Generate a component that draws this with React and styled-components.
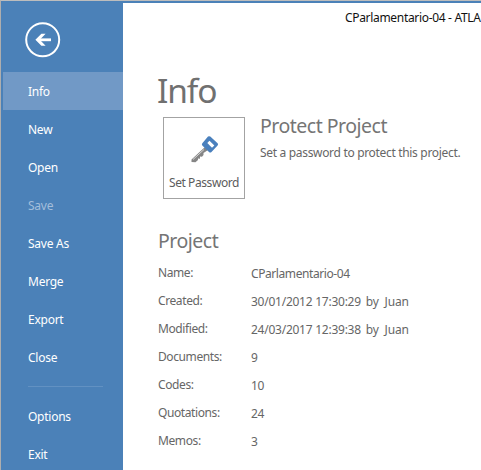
import React from "react";
import styled, { createGlobalStyle } from "styled-components";

const Global = createGlobalStyle`
  * { box-sizing: border-box; }
  body { margin: 0; overflow: hidden; background: #fff; }
`;

const Window = styled.div`
  width: 481px;
  height: 470px;
  display: grid;
  grid-template-columns: 122px 1fr;
  overflow: hidden;
  border-top: 1px solid #bdbdbd;
  border-left: 1px solid #aeaeae;
  background: #fff;
  font-family: "Noto Sans", "Open Sans", sans-serif;
  font-size: 12px;
  line-height: 16px;
  white-space: nowrap;
  color: #666;
`;

const Sidebar = styled.nav`
  background: #4b81b8;
  color: #fff;
  padding: 21px 0 0 2px;
`;

const BackButton = styled.button`
  display: block;
  width: 36px;
  height: 36px;
  margin: 0 0 14px 22px;
  padding: 0;
  border: 0;
  background: none;
`;

const MenuItem = styled.div`
  height: 38px;
  padding: 2px 0 0 25px;
  display: flex;
  align-items: center;
  background: ${(p) => (p.$active ? "#7199c6" : "transparent")};
  color: ${(p) => (p.$disabled ? "#a3bedb" : "#fff")};
  letter-spacing: -0.25px;
`;

const Divider = styled.hr`
  width: 75px;
  height: 1px;
  margin: 10px 0 10px 25px;
  border: 0;
  background: #6291c2;
`;

const Main = styled.main`
  border-top: 2px solid #4b81b8;
  padding-left: 35px;
`;

const WindowTitle = styled.div`
  height: 30px;
  padding: 7px 0 0 187px;
  color: #111;
  letter-spacing: ${(p) => p.$track}px;
`;

const PageTitle = styled.h1`
  margin: 33px 0 0 -1px;
  height: 51px;
  font-size: 33.5px;
  line-height: 48px;
  font-weight: 400;
  color: #707070;
  letter-spacing: ${(p) => p.$track}px;
`;

const Protect = styled.section`
  display: flex;
  height: 82px;
  padding-left: 5px;
`;

const ProtectText = styled.div`
  margin-top: -3px;
`;

const PasswordButton = styled.button`
  width: 82px;
  height: 82px;
  margin: 0 15px 0 0;
  padding: 17px 0 0;
  display: flex;
  flex-direction: column;
  align-items: center;
  border: 1px solid #a3a3a3;
  background: #fff;
  color: #5c5c5c;
  font: inherit;
  letter-spacing: ${(p) => p.$track}px;

  svg { margin: 0 0 10px 2px; flex: none; }
`;

const Heading = styled.h2`
  margin: 0;
  font-size: 19.5px;
  line-height: 24px;
  font-weight: 400;
  color: #757575;
  letter-spacing: ${(p) => p.$track}px;
`;

const Description = styled.p`
  margin: 7px 0 0;
  letter-spacing: ${(p) => p.$track}px;
`;

const Details = styled.section`
  padding-top: 30px;
`;

const Rows = styled.dl`
  margin: 6px 0 0;
`;

const Row = styled.div`
  height: 28px;
  display: grid;
  grid-template-columns: 93px 1fr;
  align-items: center;
`;

const Label = styled.dt`
  letter-spacing: ${(p) => p.$track}px;
`;

const Value = styled.dd`
  margin: 0;
  padding-top: 2px;
  display: flex;
  letter-spacing: ${(p) => p.$track}px;
`;

const Author = styled.span`
  margin-left: 5px;
  letter-spacing: -0.2px;
  word-spacing: 3px;
`;

const menu = [
  { text: "Info", active: true },
  { text: "New" },
  { text: "Open" },
  { text: "Save", disabled: true },
  { text: "Save As" },
  { text: "Merge" },
  { text: "Export" },
  { text: "Close" },
];

const details = [
  { label: "Name:", value: "CParlamentario-04", track: -0.42 },
  { label: "Created:", value: "30/01/2012 17:30:29", author: "by Juan", track: -0.25 },
  { label: "Modified:", value: "24/03/2017 12:39:38", author: "by Juan", track: -0.25 },
  { label: "Documents:", value: "9" },
  { label: "Codes:", value: "10", track: -0.3 },
  { label: "Quotations:", value: "24", track: -0.3 },
  { label: "Memos:", value: "3" },
];

function BackIcon() {
  return (
    <svg width="36" height="36" viewBox="0 0 36 36" fill="none" stroke="#fff">
      <circle cx="17.7" cy="17.8" r="16.5" strokeWidth="2" />
      <path d="M26 17.8H13" strokeWidth="2.8" />
      <path d="M16.4 11.8H20.6L14.8 17.8L20.6 23.8H16.4L10.4 17.8Z" fill="#fff" stroke="none" />
    </svg>
  );
}

function KeyIcon() {
  return (
    <svg width="30" height="30" viewBox="0 0 30 30">
      <path d="M15 12L1.5 24.5V27L5.5 27.2L8 25V23.5L10 23.7V21.5L12 21.7L13.5 20V18L18 15Z" fill="#858585" />
      <path d="M14 14.5L3 24.5" stroke="#d5d5d5" strokeWidth="1" />
      <path d="M18 1.5Q19 .8 20.3 1.5L27.6 8.3Q28.6 9.3 27.6 10.5L21.5 17Q20.2 18.2 19 17L12.3 10.5Q11.4 9.4 12.3 8.2Z" fill="#4a80bd" />
      <path d="M17.3 8L19.5 5.8L24.3 10.5L22 12.8Z" fill="#fff" />
    </svg>
  );
}

export default function App() {
  return (
    <>
      <Global />
      <Window>
        <Sidebar>
          <BackButton aria-label="Back"><BackIcon /></BackButton>
          {menu.map((m) => (
            <MenuItem key={m.text} $active={m.active} $disabled={m.disabled}>
              {m.text}
            </MenuItem>
          ))}
          <Divider />
          <MenuItem>Options</MenuItem>
          <MenuItem>Exit</MenuItem>
        </Sidebar>
        <Main>
          <WindowTitle $track={-0.32}>CParlamentario-04 - ATLA</WindowTitle>
          <PageTitle $track={-1.1}>Info</PageTitle>
          <Protect>
            <PasswordButton $track={-0.42}>
              <KeyIcon />
              Set Password
            </PasswordButton>
            <ProtectText>
              <Heading $track={-0.5}>Protect Project</Heading>
              <Description $track={-0.32}>Set a password to protect this project.</Description>
            </ProtectText>
          </Protect>
          <Details>
            <Heading $track={-0.5}>Project</Heading>
            <Rows>
              {details.map((d) => (
                <Row key={d.label}>
                  <Label $track={-0.4}>{d.label}</Label>
                  <Value $track={d.track || 0}>
                    {d.value}
                    {d.author && <Author>{d.author}</Author>}
                  </Value>
                </Row>
              ))}
            </Rows>
          </Details>
        </Main>
      </Window>
    </>
  );
}
